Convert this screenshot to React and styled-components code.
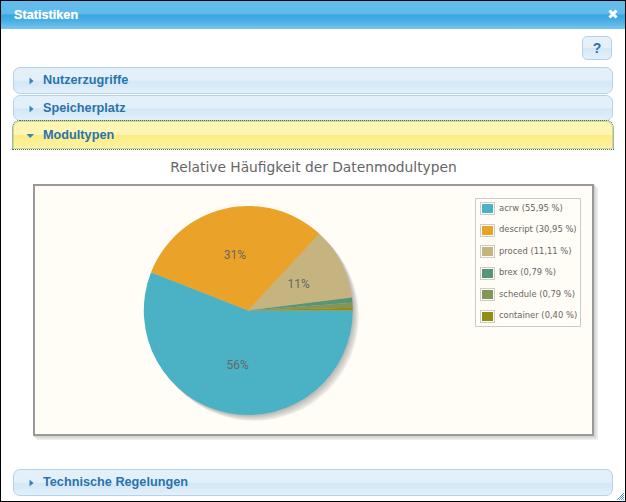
import React from "react";
import styled, { createGlobalStyle } from "styled-components";

const Global = createGlobalStyle`
  html, body { margin: 0; padding: 0; background: #fff; }
  * { box-sizing: border-box; }
`;

const Dialog = styled.div`
  position: relative;
  width: 626px;
  height: 502px;
  border: 1px solid #000;
  background: #fff;
  overflow: hidden;
  display: flex;
  flex-direction: column;
  font-family: "Liberation Sans", Arial, sans-serif;
`;

const TitleBar = styled.header`
  height: 28px;
  flex: none;
  display: flex;
  align-items: center;
  justify-content: space-between;
  padding: 0 7px 0 13px;
  background: linear-gradient(#63bdec 0%, #5fbbeb 45%, #38a6e0 50%, #48aee4 70%, #78c6ef 100%);
  color: #fff;
  font-size: 12.7px;
  font-weight: 700;
  text-shadow: 0 0 1px rgba(255, 255, 255, 0.7);
`;

const CloseIcon = styled.svg`
  width: 10px;
  height: 10px;
  display: block;
  margin-bottom: 3px;
`;

const Content = styled.main`
  flex: 1;
  display: flex;
  flex-direction: column;
  padding: 7px 12px 4px;
`;

const Toolbar = styled.div`
  display: flex;
  justify-content: flex-end;
  padding-right: 1px;
  margin-bottom: 7px;
`;

const HelpButton = styled.button`
  width: 30px;
  height: 24px;
  padding: 0;
  border: 1px solid #b5d2e9;
  border-radius: 5px;
  background: linear-gradient(#e5f1fb 0%, #e3f0fa 48%, #d4e7f6 50%, #e3f0fa 100%);
  color: #2a73ac;
  font-family: inherit;
  font-size: 14px;
  font-weight: 700;
`;

const Header = styled.div`
  position: relative;
  height: ${(p) => p.$h || 27}px;
  flex: none;
  display: flex;
  align-items: center;
  gap: ${(p) => (p.$open ? 8 : 7.5)}px;
  padding-left: ${(p) => (p.$open ? 12 : 14.5)}px;
  padding-bottom: 1px;
  margin-bottom: ${(p) => p.$gap ?? 1}px;
  border: 1px solid ${(p) => (p.$open ? "#e6d75e" : "#b5d2e9")};
  border-radius: 7px 7px ${(p) => (p.$open ? "0 0" : "7px 7px")};
  background: ${(p) =>
    p.$open
      ? "linear-gradient(#fef6b4 0%, #fef6b4 48%, #fdec83 52%, #fef3a6 100%)"
      : "linear-gradient(#e3f0fa 0%, #e2f0fa 48%, #d3e7f6 55%, #e2f0fa 100%)"};
  outline: ${(p) => (p.$open ? "1px dotted #2a6d9c" : "none")};
  color: #2a73ac;
  font-size: 12.7px;
  font-weight: 700;
`;

const Arrow = styled.svg`
  width: ${(p) => p.$w}px;
  height: 8px;
  flex: none;
  display: block;
  margin-top: 2px;
`;

const Panel = styled.section`
  height: 320px;
  flex: none;
  display: flex;
  flex-direction: column;
  align-items: stretch;
`;

const ChartTitle = styled.h2`
  margin: 10px 0 0;
  height: 25px;
  padding-left: 1px;
  text-align: center;
  color: #666;
  font-family: "DejaVu Sans", Verdana, sans-serif;
  font-size: 13.8px;
  font-weight: 400;
  line-height: 17px;
`;

const Plot = styled.div`
  position: relative;
  align-self: flex-start;
  width: 561px;
  height: 252px;
  margin-left: 20px;
  border: 2px solid #999;
  background: #fffdf6;
  box-shadow: 1px 1px 0 #d2d2d2, 2px 2px 0 #dcdcdc, 3px 3px 0 #e6e6e6, 4px 4px 0 #eee;
`;

const PieSvg = styled.svg`
  display: block;
  width: 557px;
  height: 248px;
`;

const PieLabel = styled.text`
  font-family: Roboto, "Liberation Sans", sans-serif;
  font-size: 12px;
  fill: #666;
  text-anchor: middle;
`;

const Legend = styled.ul`
  position: absolute;
  top: 12px;
  right: 11px;
  width: 106px;
  height: 129px;
  margin: 0;
  padding: 0 0 0 4px;
  list-style: none;
  border: 1px solid #ccc;
  background: #fffdf6;
  color: #666;
  font-family: "DejaVu Sans", Verdana, sans-serif;
  font-size: 8.4px;
  display: flex;
  flex-direction: column;
  justify-content: center;
`;

const LegendRow = styled.li`
  height: 21.6px;
  flex: none;
  display: flex;
  align-items: center;
  gap: 4px;
  white-space: nowrap;
`;

const LegendText = styled.span`
  margin-top: -2px;
`;

const Swatch = styled.span`
  width: 15px;
  height: 13px;
  flex: none;
  border: 1px solid #ccc;
  padding: 1px;
  background: ${(p) => p.$c};
  background-clip: content-box;
`;

const Grip = styled.svg`
  position: absolute;
  right: 1px;
  bottom: 1px;
  width: 8px;
  height: 8px;
`;

const slices = [
  { name: "acrw", pct: 55.95, color: "#4bb2c5" },
  { name: "descript", pct: 30.95, color: "#eaa228" },
  { name: "proced", pct: 11.11, color: "#c5b47f" },
  { name: "brex", pct: 0.79, color: "#579575" },
  { name: "schedule", pct: 0.79, color: "#839557" },
  { name: "container", pct: 0.4, color: "#958c12" },
];

const CX = 213.3;
const CY = 124.5;
const R = 104.5;

function slicePath(from, to) {
  const a = (from / 100) * 2 * Math.PI;
  const b = (to / 100) * 2 * Math.PI;
  const large = to - from > 50 ? 1 : 0;
  return `M${CX} ${CY}L${CX + R * Math.cos(a)} ${CY + R * Math.sin(a)}A${R} ${R} 0 ${large} 1 ${CX + R * Math.cos(b)} ${CY + R * Math.sin(b)}Z`;
}

function Pie() {
  let acc = 0;
  const paths = slices.map((s) => {
    const d = slicePath(acc, acc + s.pct);
    acc += s.pct;
    return <path key={s.name} d={d} fill={s.color} />;
  });
  return (
    <PieSvg viewBox="0 0 557 248">
      {[1.25, 2.5, 3.75, 5, 6].map((o) => (
        <circle key={o} cx={CX + o} cy={CY + o} r={R} fill="#000" fillOpacity="0.055" />
      ))}
      {paths}
      <PieLabel x="202.7" y="183">56%</PieLabel>
      <PieLabel x="200" y="73">31%</PieLabel>
      <PieLabel x="263.7" y="102">11%</PieLabel>
    </PieSvg>
  );
}

const Right = () => (
  <Arrow $w={7} viewBox="0 0 7 8"><path d="M0.5 0.5 L4.5 4 L0.5 7.5 Z" fill="#3d82b5" /></Arrow>
);
const Down = () => (
  <Arrow $w={9} viewBox="0 0 9 8"><path d="M0.5 2 H8 L4.2 6 Z" fill="#3d82b5" /></Arrow>
);

export default function App() {
  return (
    <Dialog>
      <Global />
      <TitleBar>
        <span>Statistiken</span>
        <CloseIcon viewBox="0 0 10 10">
          <path d="M1.5 1.5 L8.5 8.5 M8.5 1.5 L1.5 8.5" stroke="#fff" strokeWidth="3" />
        </CloseIcon>
      </TitleBar>
      <Content>
        <Toolbar><HelpButton>?</HelpButton></Toolbar>
        <Header><Right />Nutzerzugriffe</Header>
        <Header $gap={0} $h={26}><Right />Speicherplatz</Header>
        <Header $open $gap={0} $h={28}><Down />Modultypen</Header>
        <Panel>
          <ChartTitle>Relative Häufigkeit der Datenmodultypen</ChartTitle>
          <Plot>
            <Pie />
            <Legend>
              {slices.map((s) => (
                <LegendRow key={s.name}>
                  <Swatch $c={s.color} />
                  <LegendText>{s.name} ({s.pct.toFixed(2).replace(".", ",")} %)</LegendText>
                </LegendRow>
              ))}
            </Legend>
          </Plot>
        </Panel>
        <Header><Right />Technische Regelungen</Header>
      </Content>
      <Grip viewBox="0 0 8 8">
        {[[7,1],[6,2],[7,3],[5,3],[4,4],[6,4],[7,5],[5,5],[3,5],[2,6],[4,6],[6,6],[7,7],[5,7],[3,7],[1,7]].map(([x, y]) => (
          <rect key={`${x}-${y}`} x={x} y={y} width="1" height="1" fill="#5a9ad0" />
        ))}
      </Grip>
    </Dialog>
  );
}
